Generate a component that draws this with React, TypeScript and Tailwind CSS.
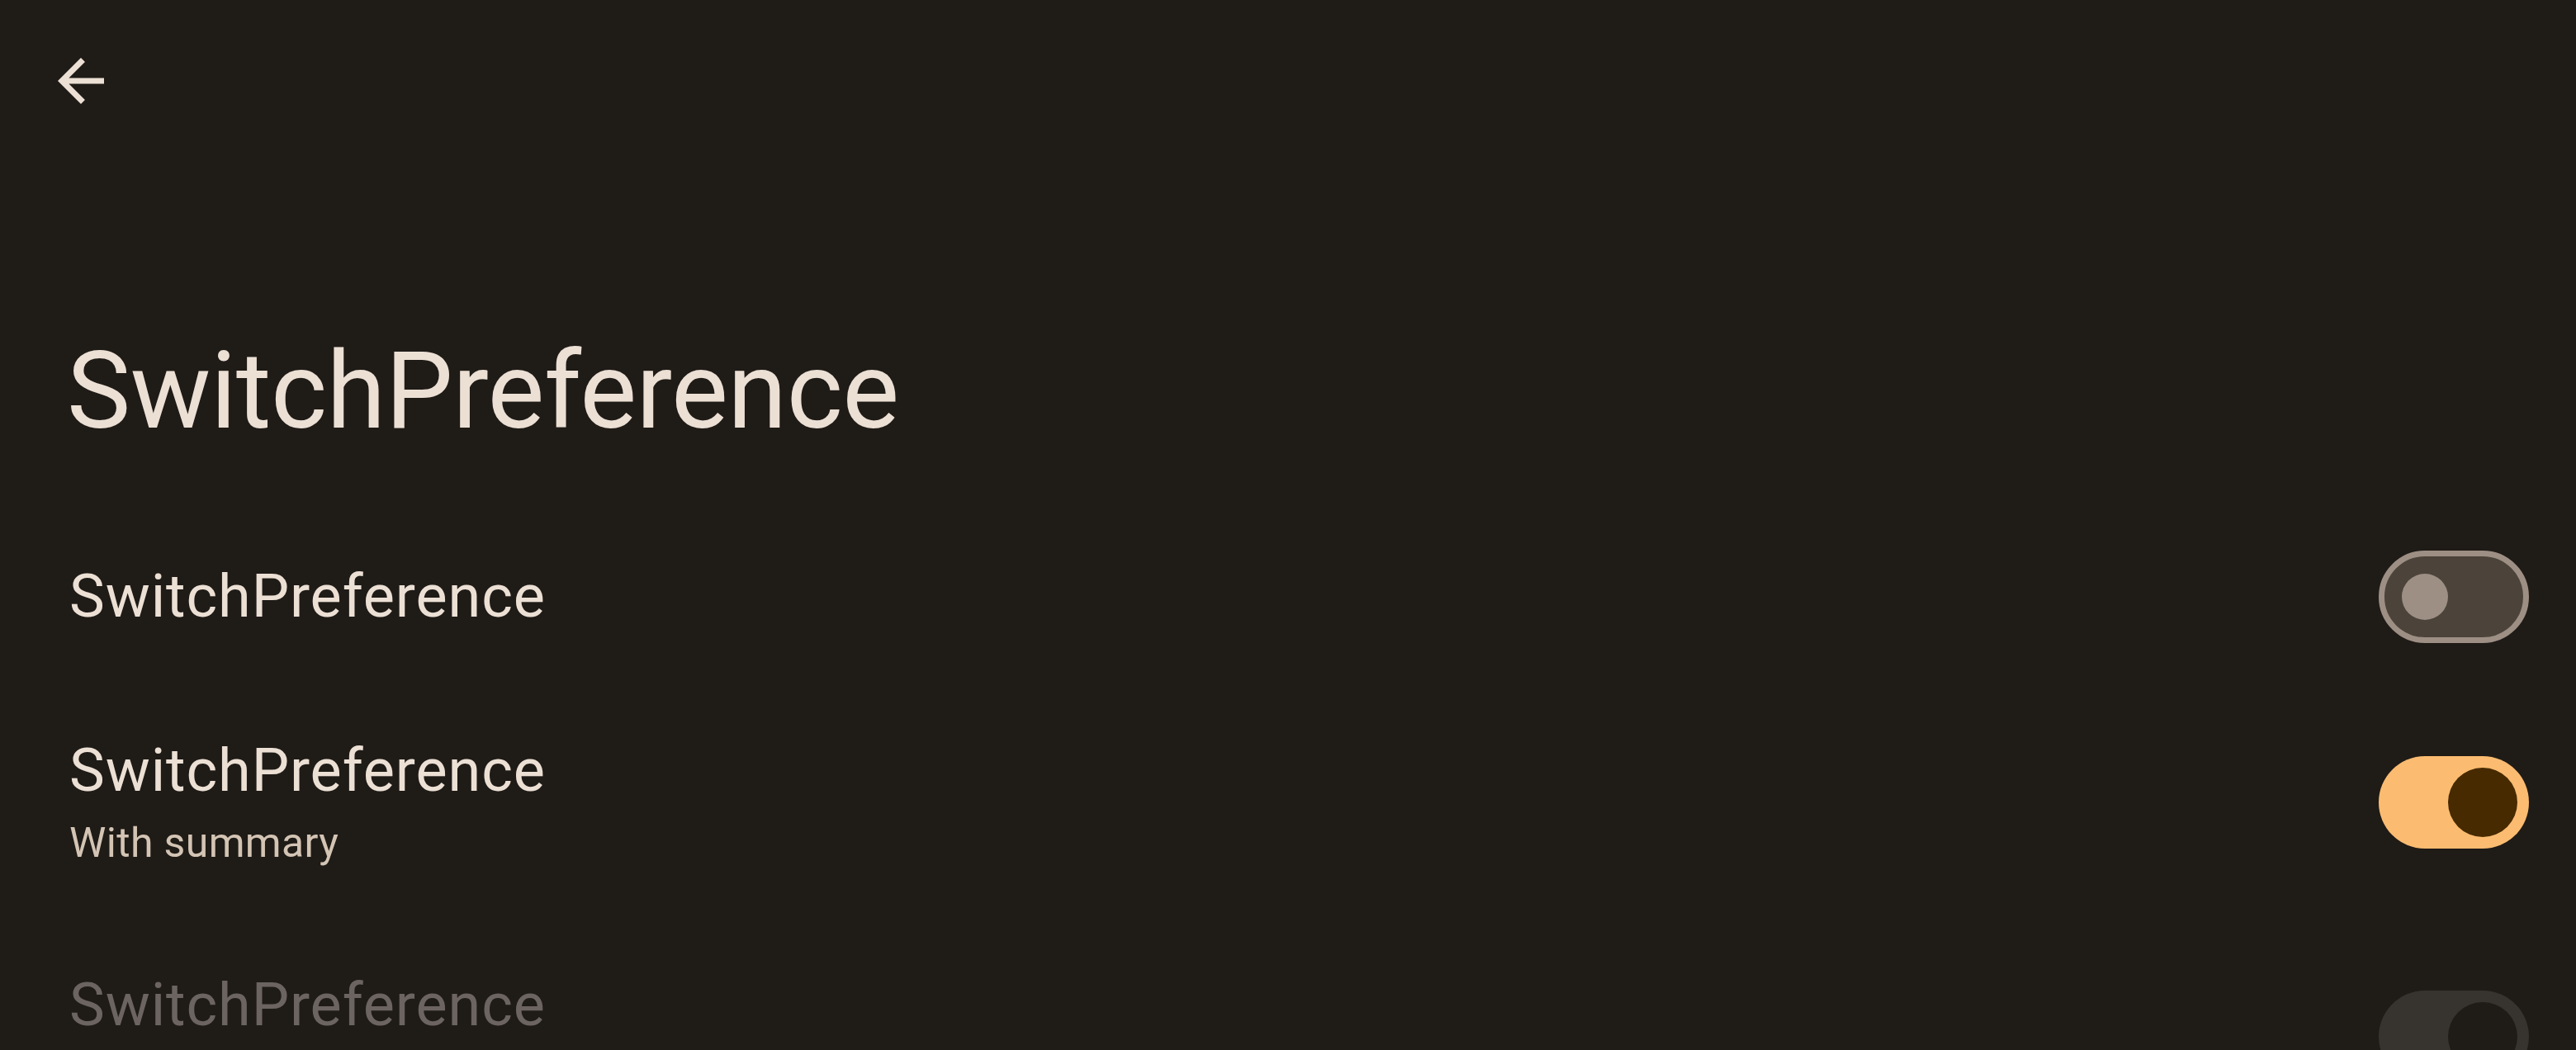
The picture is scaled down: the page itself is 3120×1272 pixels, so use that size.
import React from 'react';

type SwitchProps = { checked: boolean; disabled?: boolean };

const Switch: React.FC<SwitchProps> = ({ checked, disabled }) => {
  if (disabled) {
    return (
      <div className="flex h-[112px] w-[182px] shrink-0 items-center justify-end rounded-full bg-[#37332e] pr-[14px]">
        <div className="h-[84px] w-[84px] rounded-full bg-[#1f1b17]" />
      </div>
    );
  }
  if (checked) {
    return (
      <div className="flex h-[112px] w-[182px] shrink-0 items-center justify-end rounded-full bg-[#fbbc71] pr-[14px]">
        <div className="h-[84px] w-[84px] rounded-full bg-[#472a00]" />
      </div>
    );
  }
  return (
    <div className="flex h-[112px] w-[182px] shrink-0 items-center justify-start rounded-full border-[7px] border-[#9d8f84] bg-[#4c443a] pl-[21px]">
      <div className="h-[56px] w-[56px] rounded-full bg-[#9d8f84]" />
    </div>
  );
};

type RowProps = { title: string; summary?: string; checked: boolean; disabled?: boolean; height: string };

const PreferenceRow: React.FC<RowProps> = ({ title, summary, checked, disabled, height }) => (
  <div className={`flex items-center justify-between pl-[84px] pr-[57px] ${height}`}>
    <div className="flex flex-col">
      <span
        className={`text-[72px] leading-[72px] tracking-[0.9px] ${disabled ? 'text-[#6b6460]' : 'text-[#ece0d5]'}`}
      >
        {title}
      </span>
      {summary && (
        <span
          className={`mt-[26px] text-[50px] leading-[50px] tracking-[0.35px] ${disabled ? 'text-[#5e5852]' : 'text-[#d3c4b4]'}`}
        >
          {summary}
        </span>
      )}
    </div>
    <Switch checked={checked} disabled={disabled} />
  </div>
);

export default function App() {
  return (
    <div
      className="h-screen overflow-hidden bg-[#1f1b17] text-[#ece0d5]"
      style={{ fontFamily: 'Roboto, "Noto Sans", sans-serif' }}
    >
      {/* Toolbar */}
      <div className="pl-[56px] pt-[56px]">
        <button className="flex h-[84px] w-[84px] items-center justify-center">
          <svg viewBox="0 0 24 24" className="h-[84px] w-[84px]" fill="#ece0d5">
            <path d="M20 11H7.83l5.59-5.59L12 4l-8 8 8 8 1.41-1.41L7.83 13H20v-2z" />
          </svg>
        </button>
      </div>

      {/* Expanded title */}
      <h1 className="mt-[269px] pl-[81px] text-[130px] font-normal leading-[130px] tracking-[-0.5px]">
        SwitchPreference
      </h1>

      {/* Preferences */}
      <div className="mt-[76px] flex flex-col">
        <PreferenceRow title="SwitchPreference" checked={false} height="h-[215px]" />
        <PreferenceRow title="SwitchPreference" summary="With summary" checked height="h-[284px]" />
        <PreferenceRow title="SwitchPreference" summary="With summary" checked disabled height="h-[284px]" />
      </div>
    </div>
  );
}
